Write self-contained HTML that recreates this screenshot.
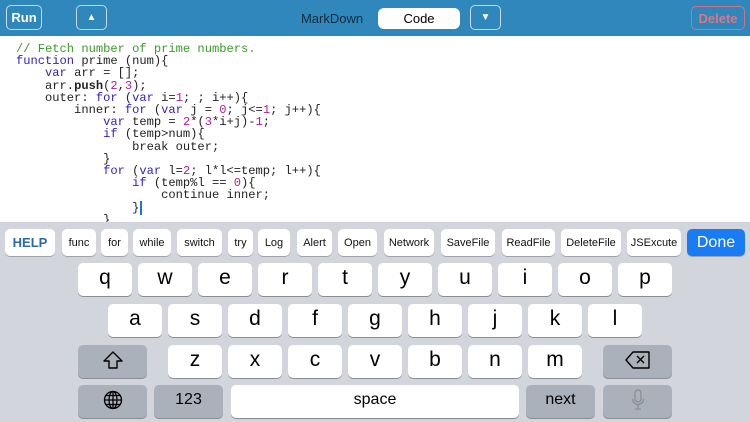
<!DOCTYPE html>
<html><head><meta charset="utf-8"><style>
*{margin:0;padding:0;box-sizing:border-box}
body{width:750px;height:422px;overflow:hidden;position:relative;background:#fff;font-family:"Liberation Sans",sans-serif}
.bar{position:absolute;left:0;top:0;width:750px;height:36px;background:#2f87bc}
.ob{position:absolute;border:1px solid rgba(255,255,255,.7);border-radius:5px;color:#fff;font-weight:bold;font-size:13px;display:flex;align-items:center;justify-content:center}
.code{position:absolute;left:16px;top:43px;font-family:"Liberation Mono",monospace;font-size:12.1px;line-height:12.2px;white-space:pre;color:#222}
.k{color:#3322bb}.c{color:#3a9a2a}.n{color:#b0209a}
.kb{position:absolute;left:0;top:222px;width:750px;height:200px;background:#d2d5db}
.t{position:absolute;top:229px;height:27px;background:#fff;border-radius:5px;font-size:11px;display:flex;align-items:center;justify-content:center;color:#111;box-shadow:0 1px 0 #a0a4aa}
.key{position:absolute;height:33px;width:54px;background:#fff;border-radius:5px;box-shadow:0 1px 0 #898c92;font-size:21px;display:flex;align-items:center;justify-content:center;color:#000;padding-bottom:3px}
.g{background:#abb1ba}
</style></head><body>
<div class="bar"></div>
<div class="ob" style="left:6px;top:5px;width:36px;height:25px">Run</div>
<div class="ob" style="left:76px;top:5px;width:31px;height:25px;font-size:10px">▲</div>
<div style="position:absolute;left:290px;top:8px;width:84px;height:21px;color:#152a3a;font-size:13px;display:flex;align-items:center;justify-content:center">MarkDown</div>
<div style="position:absolute;left:378px;top:8px;width:82px;height:21px;background:#fff;border-radius:6px;color:#000;font-size:13px;display:flex;align-items:center;justify-content:center">Code</div>
<div class="ob" style="left:470px;top:5px;width:31px;height:25px;font-size:10px">▼</div>
<div class="ob" style="left:691px;top:6px;width:54px;height:24px;color:#e07480;border-color:#c8748a">Delete</div>
<div class="code"><span class="c">// Fetch number of prime numbers.</span>
<span class="k">function</span> prime (num){
    <span class="k">var</span> arr = [];
    arr.<b>push</b>(<span class="n">2</span>,<span class="n">3</span>);
    outer: <span class="k">for</span> (<span class="k">var</span> i=<span class="n">1</span>; ; i++){
        inner: <span class="k">for</span> (<span class="k">var</span> j = <span class="n">0</span>; j&lt;=<span class="n">1</span>; j++){
            <span class="k">var</span> temp = <span class="n">2</span>*(<span class="n">3</span>*i+j)-<span class="n">1</span>;
            <span class="k">if</span> (temp&gt;num){
                break outer;
            }
            <span class="k">for</span> (<span class="k">var</span> l=<span class="n">2</span>; l*l&lt;=temp; l++){
                <span class="k">if</span> (temp%l == <span class="n">0</span>){
                    continue inner;
                }<span style="border-left:2px solid #2a6fd0;margin-left:1px"></span>
            }</div>
<div class="kb"></div>
<div class="t" style="left:5px;width:50px;color:#2a6aa8;font-weight:bold;font-size:13px">HELP</div>
<div class="t" style="left:62px;width:34px">func</div>
<div class="t" style="left:101px;width:27px">for</div>
<div class="t" style="left:133px;width:38px">while</div>
<div class="t" style="left:177px;width:45px">switch</div>
<div class="t" style="left:228px;width:25px">try</div>
<div class="t" style="left:258px;width:32px">Log</div>
<div class="t" style="left:297px;width:35px">Alert</div>
<div class="t" style="left:338px;width:39px">Open</div>
<div class="t" style="left:384px;width:50px">Network</div>
<div class="t" style="left:441px;width:54px">SaveFile</div>
<div class="t" style="left:502px;width:53px">ReadFile</div>
<div class="t" style="left:561px;width:60px">DeleteFile</div>
<div class="t" style="left:627px;width:54px">JSExcute</div>
<div class="t" style="left:687px;width:58px;background:#1a7cf5;color:#fff;font-size:16px">Done</div>
<div class="key" style="left:78px;top:263px">q</div>
<div class="key" style="left:138px;top:263px">w</div>
<div class="key" style="left:198px;top:263px">e</div>
<div class="key" style="left:258px;top:263px">r</div>
<div class="key" style="left:318px;top:263px">t</div>
<div class="key" style="left:378px;top:263px">y</div>
<div class="key" style="left:438px;top:263px">u</div>
<div class="key" style="left:498px;top:263px">i</div>
<div class="key" style="left:558px;top:263px">o</div>
<div class="key" style="left:618px;top:263px">p</div>
<div class="key" style="left:108px;top:304px">a</div>
<div class="key" style="left:168px;top:304px">s</div>
<div class="key" style="left:228px;top:304px">d</div>
<div class="key" style="left:288px;top:304px">f</div>
<div class="key" style="left:348px;top:304px">g</div>
<div class="key" style="left:408px;top:304px">h</div>
<div class="key" style="left:468px;top:304px">j</div>
<div class="key" style="left:528px;top:304px">k</div>
<div class="key" style="left:588px;top:304px">l</div>
<div class="key g" style="left:78px;top:345px;width:69px"><svg width="22" height="20" viewBox="0 0 22 20"><path d="M11 2 L20 11 H15 V18 H7 V11 H2 Z" fill="none" stroke="#000" stroke-width="1.4" stroke-linejoin="round"/></svg></div>
<div class="key" style="left:168px;top:345px">z</div>
<div class="key" style="left:228px;top:345px">x</div>
<div class="key" style="left:288px;top:345px">c</div>
<div class="key" style="left:348px;top:345px">v</div>
<div class="key" style="left:408px;top:345px">b</div>
<div class="key" style="left:468px;top:345px">n</div>
<div class="key" style="left:528px;top:345px">m</div>
<div class="key g" style="left:603px;top:345px;width:69px"><svg width="26" height="18" viewBox="0 0 26 18"><path d="M8 1 H24 V17 H8 L1 9 Z" fill="none" stroke="#000" stroke-width="1.4" stroke-linejoin="round"/><path d="M12 5 L19 12 M19 5 L12 12" stroke="#000" stroke-width="1.4"/></svg></div>
<div class="key g" style="left:78px;top:385px;width:69px"><svg width="20" height="20" viewBox="0 0 20 20" fill="none" stroke="#000" stroke-width="1.3"><circle cx="10" cy="10" r="8.5"/><ellipse cx="10" cy="10" rx="4" ry="8.5"/><path d="M10 1.5V18.5M1.5 10H18.5M3 5.5H17M3 14.5H17"/></svg></div>
<div class="key g" style="left:154px;top:385px;width:69px;font-size:16px">123</div>
<div class="key" style="left:231px;top:385px;width:288px;font-size:16px">space</div>
<div class="key g" style="left:526px;top:385px;width:69px;font-size:16px">next</div>
<div class="key g" style="left:603px;top:385px;width:69px"><svg width="14" height="22" viewBox="0 0 14 22" fill="none" stroke="#8a8f96" stroke-width="1.3"><rect x="4" y="1" width="6" height="12" rx="3"/><path d="M1.5 10a5.5 5.5 0 0 0 11 0M7 15.5V20M4 20H10"/></svg></div>
</body></html>
